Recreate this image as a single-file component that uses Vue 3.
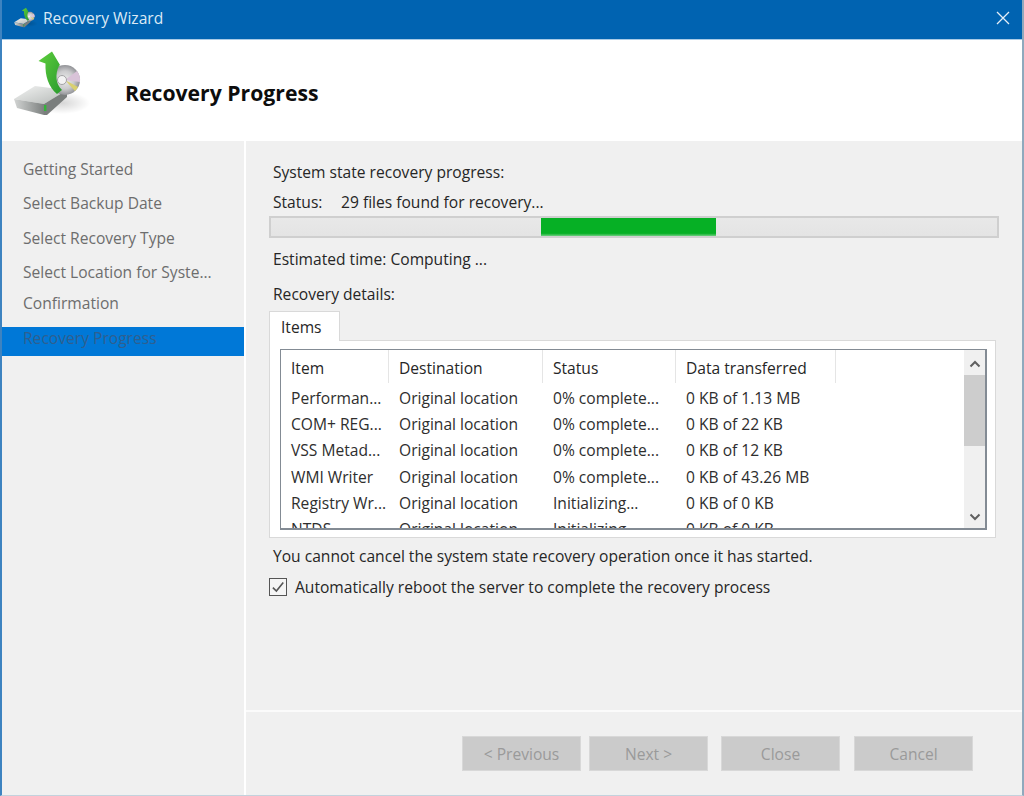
<script setup>
const steps = [
  { label: 'Getting Started' },
  { label: 'Select Backup Date' },
  { label: 'Select Recovery Type' },
  { label: 'Select Location for Syste...' },
  { label: 'Confirmation', tight: true },
  { label: 'Recovery Progress', active: true },
]
const columns = [
  { label: 'Item', width: 108 },
  { label: 'Destination', width: 154 },
  { label: 'Status', width: 133 },
  { label: 'Data transferred', width: 160 },
]
const rows = [
  ['Performan...', 'Original location', '0% complete...', '0 KB of 1.13 MB'],
  ['COM+ REG...', 'Original location', '0% complete...', '0 KB of 22 KB'],
  ['VSS Metad...', 'Original location', '0% complete...', '0 KB of 12 KB'],
  ['WMI Writer', 'Original location', '0% complete...', '0 KB of 43.26 MB'],
  ['Registry Wr...', 'Original location', 'Initializing...', '0 KB of 0 KB'],
  ['NTDS', 'Original location', 'Initializing...', '0 KB of 0 KB'],
]
const buttons = ['< Previous', 'Next >', 'Close', 'Cancel']
</script>

<template>
  <div class="window">
    <svg class="defs" width="0" height="0" aria-hidden="true">
      <defs>
        <linearGradient id="arrowFill" x1="0" y1="0" x2="1" y2="1">
          <stop offset="0" stop-color="#5fd03c" />
          <stop offset="1" stop-color="#2a9a2e" />
        </linearGradient>
        <linearGradient id="driveTop" x1="0" y1="0" x2="1" y2="1">
          <stop offset="0" stop-color="#f2f3f2" />
          <stop offset="1" stop-color="#b4b8b6" />
        </linearGradient>
        <linearGradient id="driveFront" x1="0" y1="0" x2="1" y2="0">
          <stop offset="0" stop-color="#d2d4d3" />
          <stop offset="1" stop-color="#7d8180" />
        </linearGradient>
        <radialGradient id="disc" cx="0.5" cy="0.5" r="0.5">
          <stop offset="0" stop-color="#ececec" />
          <stop offset="0.6" stop-color="#cbcbcd" />
          <stop offset="1" stop-color="#929397" />
        </radialGradient>
        <radialGradient id="shadow" cx="0.5" cy="0.5" r="0.5">
          <stop offset="0" stop-color="#000" stop-opacity="0.16" />
          <stop offset="1" stop-color="#000" stop-opacity="0" />
        </radialGradient>
        <symbol id="wizardIcon" viewBox="10 50 84 70">
          <ellipse cx="62" cy="103" rx="28" ry="11" fill="url(#shadow)" />
          <polygon points="14,99 35,86 67,90 44,104" fill="url(#driveTop)" />
          <polygon points="14,99 44,104 44,115 17,108" fill="url(#driveFront)" />
          <polygon points="44,104 67,90 67,97 47,115 44,115" fill="#7a7e7d" />
          <rect x="44" y="105" width="2.4" height="6" fill="#35b43a" />
          <circle cx="65" cy="80" r="15" fill="url(#disc)" />
          <path d="M65 80 L77 71 A15 15 0 0 1 80 82 Z" fill="#d9c3d8" />
          <path d="M65 80 L75 91 A15 15 0 0 0 78 87 Z" fill="#d9d070" />
          <circle cx="62" cy="80" r="4.5" fill="#f3f3f3" stroke="#a2a2a4" stroke-width="1" />
          <path d="M52 51.5 L38.5 61 L45.5 63.5 C45 76 48.5 87 57 94 L62 90 C55.5 84 55 74 59 66 L60 65 Z" fill="url(#arrowFill)" />
        </symbol>
      </defs>
    </svg>

    <header class="titlebar">
      <svg class="title-icon"><use href="#wizardIcon" /></svg>
      <span class="title-text">Recovery Wizard</span>
      <svg class="close" viewBox="0 0 14 14">
        <path d="M1 1 L13 13 M13 1 L1 13" />
      </svg>
    </header>

    <section class="banner">
      <svg class="banner-icon"><use href="#wizardIcon" /></svg>
      <h1 class="banner-title">Recovery Progress</h1>
    </section>

    <div class="body">
      <nav class="sidebar">
        <div
          v-for="step in steps"
          :key="step.label"
          class="step"
          :class="{ tight: step.tight, active: step.active }"
        >{{ step.label }}</div>
      </nav>

      <main class="main">
        <div class="content">
          <div class="line heading">System state recovery progress:</div>
          <div class="line status">
            <span class="status-label">Status:</span>
            <span>29 files found for recovery...</span>
          </div>
          <div class="progress"><div class="progress-fill"></div></div>
          <div class="line estimate">Estimated time: Computing ...</div>
          <div class="line details">Recovery details:</div>

          <div class="tab">Items</div>
          <div class="tab-panel">
            <div class="list">
              <div class="table">
                <div class="thead">
                  <div
                    v-for="col in columns"
                    :key="col.label"
                    class="th"
                    :style="{ width: col.width + 'px' }"
                  >{{ col.label }}</div>
                </div>
                <div class="tbody">
                  <div v-for="row in rows" :key="row[0]" class="tr">
                    <div
                      v-for="(cell, i) in row"
                      :key="i"
                      class="td"
                      :style="{ width: columns[i].width + 'px' }"
                    >{{ cell }}</div>
                  </div>
                </div>
              </div>
              <div class="scrollbar">
                <svg class="chevron up" viewBox="0 0 12 8"><path d="M1.5 6.5 L6 2 L10.5 6.5" /></svg>
                <div class="thumb"></div>
                <div class="track"></div>
                <svg class="chevron down" viewBox="0 0 12 8"><path d="M1.5 1.5 L6 6 L10.5 1.5" /></svg>
              </div>
            </div>
          </div>

          <div class="line warning">You cannot cancel the system state recovery operation once it has started.</div>
          <label class="check-row">
            <span class="checkbox">
              <svg viewBox="0 0 14 14"><path d="M2.5 7.5 L5.6 10.6 L11.6 3" /></svg>
            </span>
            <span>Automatically reboot the server to complete the recovery process</span>
          </label>
        </div>

        <footer class="footer">
          <button v-for="b in buttons" :key="b" class="btn" disabled>{{ b }}</button>
        </footer>
      </main>
    </div>
  </div>
</template>

<style>
html, body { margin: 0; background: #ffffff; }
</style>

<style scoped>
.window {
  width: 1024px;
  height: 796px;
  box-sizing: border-box;
  display: flex;
  flex-direction: column;
  background: #fff;
  border-left: 2px solid #3d83c0;
  border-right: 2px solid #8fa9bd;
  border-bottom: 1px solid #c3d2dd;
  font-family: "Open Sans", "Noto Sans", sans-serif;
  font-size: 15.6px;
  color: #262626;
  overflow: hidden;
}
.defs { position: absolute; }
.titlebar {
  height: 39px;
  margin: 0 -2px;
  flex: none;
  background: #0063b1;
  display: flex;
  align-items: center;
  padding: 0 0 3px 13px;
  box-sizing: border-box;
  color: #dbe9f5;
}
.title-icon { width: 26px; height: 22px; flex: none; }
.title-text { margin-left: 4px; font-size: 15.6px; }
.close {
  width: 14px;
  height: 14px;
  margin-left: auto;
  margin-right: 14px;
  fill: none;
  stroke: #e4eef7;
  stroke-width: 1.3;
}
.banner {
  height: 102px;
  flex: none;
  display: flex;
  align-items: center;
  border-top: 1px solid #a9cbe6;
  box-sizing: border-box;
  padding-left: 8px;
}
.banner-icon { width: 84px; height: 70px; flex: none; margin-top: -11px; }
.banner-title {
  margin: 4px 0 0 31px;
  font-size: 21.2px;
  font-weight: 700;
  color: #0d0d0d;
}
.body { flex: 1; display: flex; min-height: 0; }
.sidebar {
  width: 242px;
  flex: none;
  background: #f0f0f0;
  padding-top: 11px;
  box-sizing: border-box;
  color: #6d6d6d;
}
.step {
  height: 34.4px;
  line-height: 34.4px;
  padding-left: 21px;
  white-space: nowrap;
}
.step.tight { margin-top: -3.5px; }
.step.active {
  height: 28.5px;
  line-height: 22px;
  margin-top: 7px;
  background: #0078d7;
  color: #2f5f8f;
}
.main {
  flex: 1;
  margin-left: 2px;
  background: #f0f0f0;
  display: flex;
  flex-direction: column;
  min-width: 0;
}
.content { flex: 1; padding: 20px 21px 0 27px; }
.line { line-height: 22px; white-space: nowrap; }
.status { margin-top: 8px; display: flex; }
.status-label { width: 68px; flex: none; }
.progress {
  margin: 3px 0 0 -4px;
  width: 730px;
  height: 22px;
  box-sizing: border-box;
  border: 2px solid #cfcfcf;
  background: linear-gradient(#e8e8e8, #e4e4e4);
}
.progress-fill {
  width: 175px;
  height: 100%;
  margin-left: 270px;
  background: linear-gradient(#06b025 85%, #6ccf7e);
}
.estimate { margin-top: 10px; }
.details { margin-top: 13px; }
.tab {
  width: 71px;
  height: 30px;
  margin: 6px 0 0 -4px;
  box-sizing: border-box;
  background: #fff;
  border: 1px solid #d9d9d9;
  border-bottom: 0;
  padding-left: 11px;
  line-height: 30px;
  position: relative;
  z-index: 1;
}
.tab-panel {
  width: 727px;
  height: 198px;
  margin: -1px 0 0 -4px;
  box-sizing: border-box;
  background: #fff;
  border: 1px solid #d9d9d9;
  padding: 8px 8px 7px 10px;
}
.list {
  height: 100%;
  box-sizing: border-box;
  border: 1px solid #838b94;
  border-width: 1px 2px 2px 1px;
  display: flex;
  overflow: hidden;
}
.table { flex: 1; min-width: 0; overflow: hidden; }
.thead { display: flex; height: 33px; }
.th {
  box-sizing: border-box;
  padding-left: 10px;
  line-height: 37px;
  border-right: 1px solid #e5e5e5;
  white-space: nowrap;
}
.tbody { padding-top: 2px; }
.tr { display: flex; height: 26.2px; }
.td {
  box-sizing: border-box;
  padding-left: 10px;
  line-height: 26px;
  white-space: nowrap;
  color: #2e2e2e;
}
.scrollbar {
  width: 21px;
  flex: none;
  background: #f0f0f0;
  display: flex;
  flex-direction: column;
  align-items: center;
}
.chevron {
  width: 12px;
  height: 8px;
  flex: none;
  fill: none;
  stroke: #606060;
  stroke-width: 2;
}
.chevron.up { margin: 10px 0 7px; }
.chevron.down { margin: 0 0 7px; }
.thumb { width: 100%; height: 71px; flex: none; background: #cdcdcd; }
.track { flex: 1; }
.warning { margin-top: 7px; }
.check-row {
  display: flex;
  align-items: center;
  margin-top: 9px;
  margin-left: -4px;
  white-space: nowrap;
}
.checkbox {
  width: 18px;
  height: 18px;
  flex: none;
  box-sizing: border-box;
  border: 1.5px solid #555;
  margin-right: 8px;
  display: flex;
  background: #f5f5f5;
}
.checkbox svg { width: 100%; height: 100%; fill: none; stroke: #555; stroke-width: 1.4; }
.footer {
  height: 85px;
  flex: none;
  box-sizing: border-box;
  border-top: 2px solid #fbfbfb;
  display: flex;
  padding: 24px 0 0 216px;
}
.btn {
  width: 119px;
  height: 35px;
  box-sizing: border-box;
  border: 1px solid #d8d8d8;
  background: #cbcbcb;
  color: #9a9a9a;
  font: inherit;
  padding: 0;
  margin-right: 13px;
}
.btn:first-child { margin-right: 8px; }
.btn:nth-child(3) { margin-right: 14px; }
</style>
